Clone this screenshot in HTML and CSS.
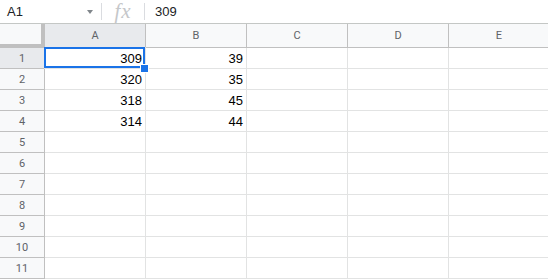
FILE: index.html
```html
<!DOCTYPE html>
<html lang="en">
<head>
    <meta charset="UTF-8">
    <title>Sheet</title>
    <link rel="stylesheet" href="styles.css">
</head>
<body>
    <div class="formula-bar">
        <div class="name-box">
            <span>A1</span>
            <span class="caret"></span>
        </div>
        <div class="divider"></div>
        <div class="fx">fx</div>
        <div class="divider"></div>
        <div class="formula">309</div>
    </div>

    <div class="sheet">
        <div class="corner"></div>
        <div class="col-head active">A</div>
        <div class="col-head">B</div>
        <div class="col-head">C</div>
        <div class="col-head">D</div>
        <div class="col-head">E</div>

        <div class="row-head active">1</div>
        <div class="cell selected">309<span class="handle"></span></div>
        <div class="cell">39</div>
        <div class="cell"></div>
        <div class="cell"></div>
        <div class="cell"></div>

        <div class="row-head">2</div>
        <div class="cell">320</div>
        <div class="cell">35</div>
        <div class="cell"></div>
        <div class="cell"></div>
        <div class="cell"></div>

        <div class="row-head">3</div>
        <div class="cell">318</div>
        <div class="cell">45</div>
        <div class="cell"></div>
        <div class="cell"></div>
        <div class="cell"></div>

        <div class="row-head">4</div>
        <div class="cell">314</div>
        <div class="cell">44</div>
        <div class="cell"></div>
        <div class="cell"></div>
        <div class="cell"></div>

        <div class="row-head">5</div>
        <div class="cell"></div><div class="cell"></div><div class="cell"></div><div class="cell"></div><div class="cell"></div>
        <div class="row-head">6</div>
        <div class="cell"></div><div class="cell"></div><div class="cell"></div><div class="cell"></div><div class="cell"></div>
        <div class="row-head">7</div>
        <div class="cell"></div><div class="cell"></div><div class="cell"></div><div class="cell"></div><div class="cell"></div>
        <div class="row-head">8</div>
        <div class="cell"></div><div class="cell"></div><div class="cell"></div><div class="cell"></div><div class="cell"></div>
        <div class="row-head">9</div>
        <div class="cell"></div><div class="cell"></div><div class="cell"></div><div class="cell"></div><div class="cell"></div>
        <div class="row-head">10</div>
        <div class="cell"></div><div class="cell"></div><div class="cell"></div><div class="cell"></div><div class="cell"></div>
        <div class="row-head">11</div>
        <div class="cell"></div><div class="cell"></div><div class="cell"></div><div class="cell"></div><div class="cell"></div>
    </div>
</body>
</html>
```

FILE: styles.css
```css
* {
    box-sizing: border-box;
}

body {
    margin: 0;
    padding: 0;
    font-family: "Liberation Sans", Arial, sans-serif;
    background-color: #fff;
    overflow: hidden;
}

/* Formula bar */
.formula-bar {
    display: flex;
    align-items: center;
    height: 24px;
    border-bottom: 1px solid #c4c7c5;
    font-size: 13px;
    color: #202124;
}

.name-box {
    width: 101px;
    display: flex;
    align-items: center;
    justify-content: space-between;
    padding: 0 8px 0 7px;
}

.caret {
    width: 0;
    height: 0;
    border-left: 3.5px solid transparent;
    border-right: 3.5px solid transparent;
    border-top: 4px solid #80868b;
    margin-top: 1px;
}

.divider {
    width: 1px;
    height: 17px;
    background-color: #dadce0;
}

.fx {
    width: 42px;
    text-align: center;
    font-family: "Liberation Serif", serif;
    font-style: italic;
    font-size: 21px;
    color: #c5c7ca;
    line-height: 20px;
    margin-top: -2px;
    letter-spacing: 1px;
}

.formula {
    padding-left: 10px;
}

/* Grid */
.sheet {
    display: grid;
    grid-template-columns: 45px repeat(5, 101px);
    grid-auto-rows: 21px;
    grid-template-rows: 24px;
}

.corner {
    background-color: #f8f9fa;
    border-right: 4px solid #c0c0c0;
    border-bottom: 4px solid #c0c0c0;
}

.col-head {
    display: flex;
    align-items: center;
    justify-content: center;
    background-color: #f8f9fa;
    border-right: 1px solid #c0c0c0;
    border-bottom: 1px solid #c0c0c0;
    font-family: Roboto, Arial, sans-serif;
    font-size: 11px;
    color: #5f6368;
}

.row-head {
    display: flex;
    align-items: center;
    justify-content: center;
    background-color: #f8f9fa;
    border-right: 1px solid #c0c0c0;
    border-bottom: 1px solid #c0c0c0;
    font-family: Roboto, Arial, sans-serif;
    font-size: 11px;
    color: #5f6368;
}

.col-head.active, .row-head.active {
    background-color: #e8eaed;
}

.cell {
    position: relative;
    display: flex;
    align-items: flex-end;
    justify-content: flex-end;
    padding: 0 3px 2px 0;
    border-right: 1px solid #e2e3e3;
    border-bottom: 1px solid #e2e3e3;
    font-size: 13px;
    color: #000;
}

.cell.selected {
    box-shadow: inset 0 0 0 2px #1a73e8;
    margin: -1px 0 0 -1px;
}

.handle {
    position: absolute;
    right: -4px;
    bottom: -5px;
    width: 9px;
    height: 9px;
    background-color: #1a73e8;
    border: 1px solid #fff;
    z-index: 2;
}
```
